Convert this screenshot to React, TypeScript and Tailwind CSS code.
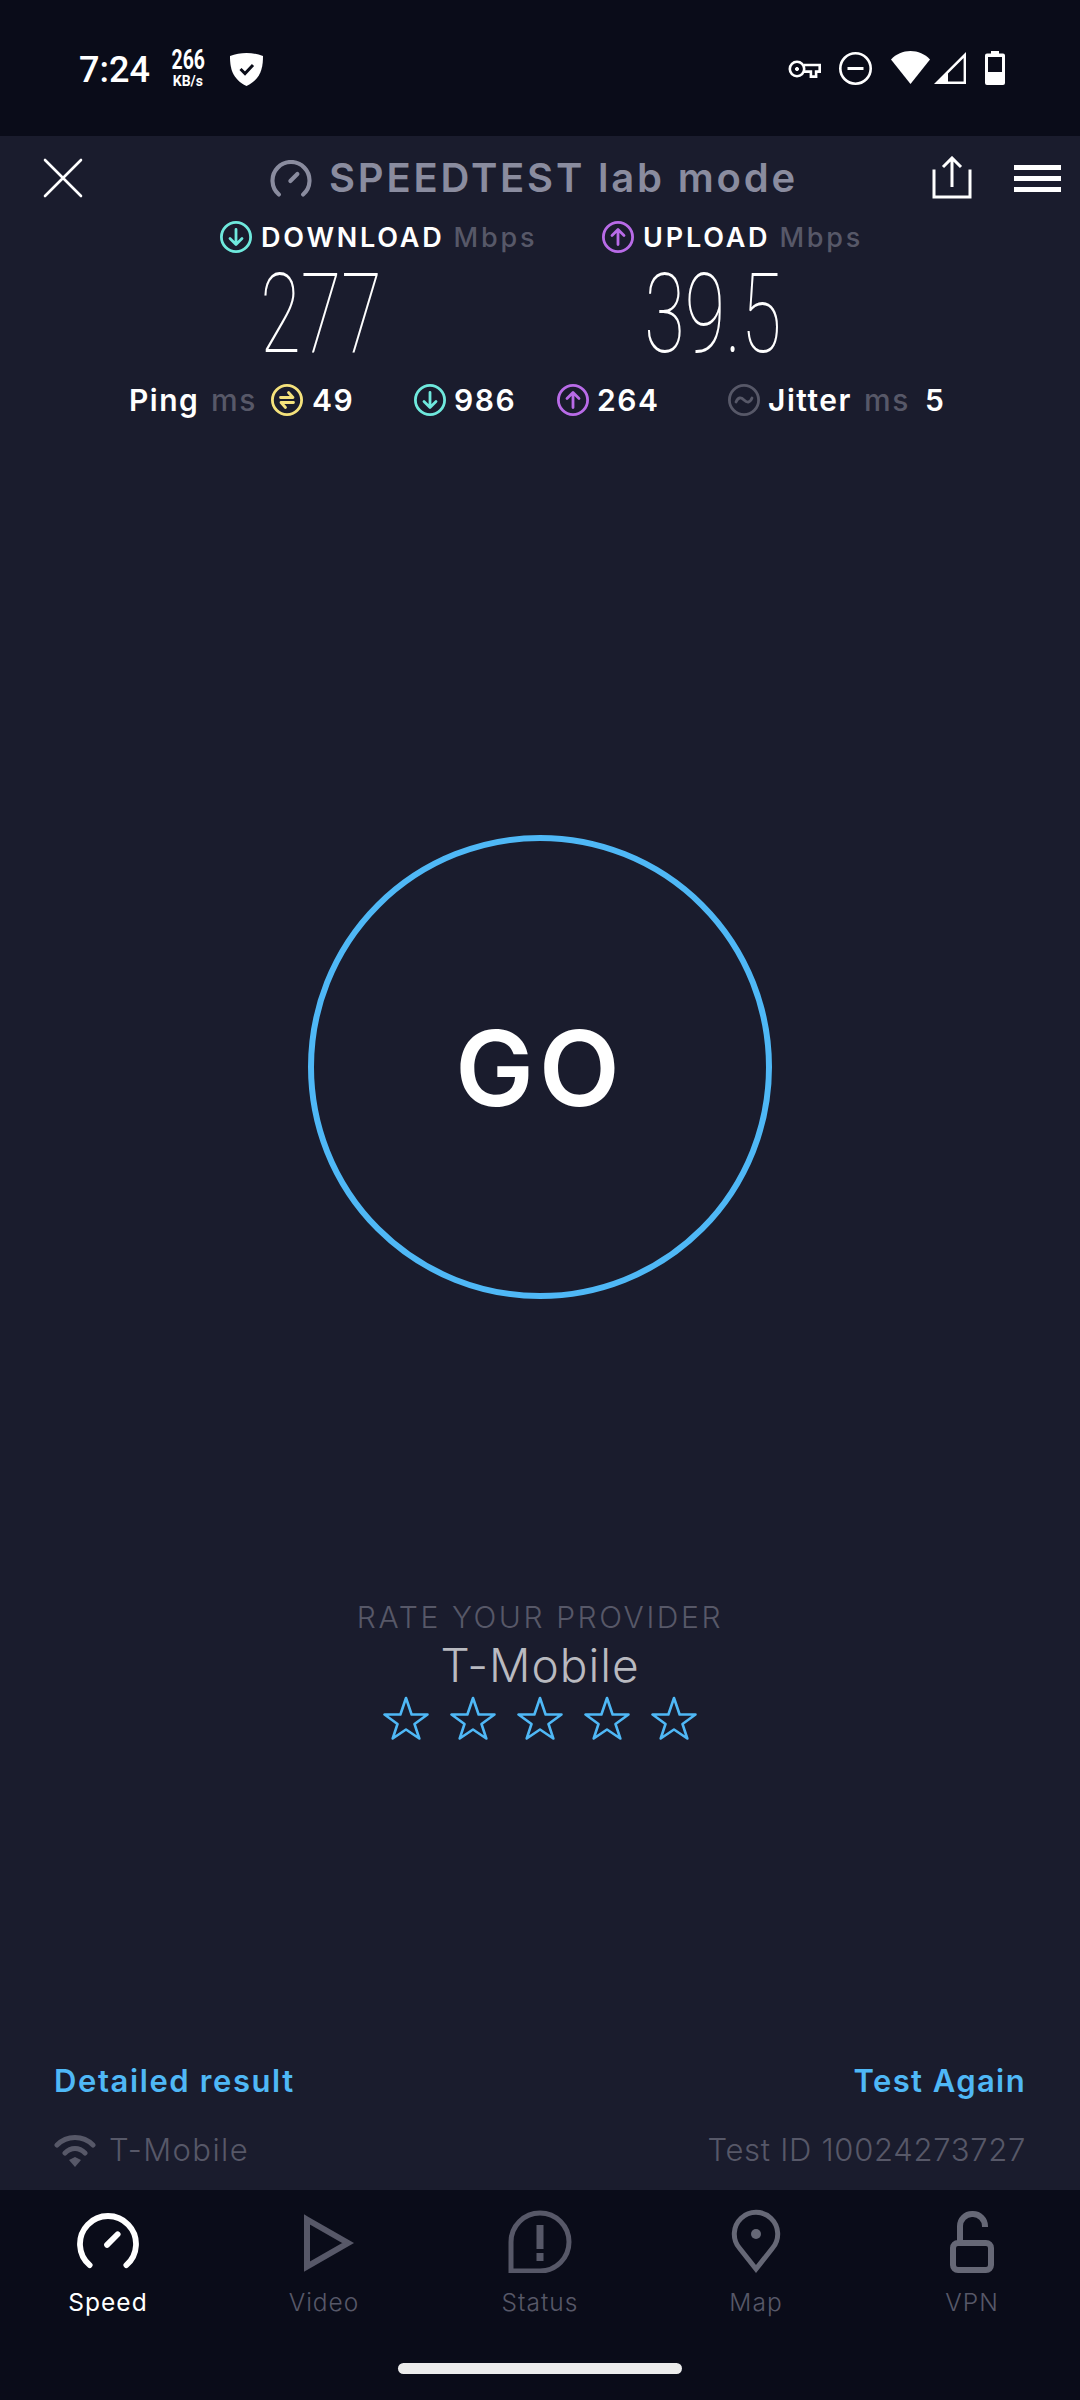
import { ReactNode } from "react";

function Gauge({ className, stroke }: { className: string; stroke: number }) {
  return (
    <svg viewBox="0 0 64 58" fill="none" stroke="currentColor" strokeWidth={stroke} strokeLinecap="round" className={className}>
      <path d="M13 54A29 29 0 1 1 51 54" />
      <path d="M31 33L42 22" />
    </svg>
  );
}

function RingIcon({ color, children }: { color: string; children: ReactNode }) {
  return (
    <svg viewBox="0 0 32 32" fill="none" stroke={color} strokeWidth="2.8" strokeLinecap="round" strokeLinejoin="round" className="h-8 w-8 shrink-0">
      <circle cx="16" cy="16" r="14.6" />
      {children}
    </svg>
  );
}

const DownGlyph = () => <path d="M16 8.5V23M10 17.5l6 6 6-6" />;
const UpGlyph = () => <path d="M16 23.5V9M10 14.500l6-6 6 6" />;

function StarOutline() {
  return (
    <svg viewBox="0 0 46 44" fill="none" stroke="#4fb8f6" strokeWidth="2.6" strokeLinejoin="round" className="h-[44px] w-[46px]">
      <path d="M23 2l5.600 16.500H44.500L31.500 28l4.800 14.500L23 33.500 9.700 42.500 14.500 28 1.500 18.500H17.400z" />
    </svg>
  );
}

function StatusBar() {
  return (
    <div className="flex h-[136px] shrink-0 items-start justify-between bg-[#0a0c19] pl-[79px] pr-[75px] pt-[50px] text-white">
      <div className="flex items-start">
        <span className="mt-[-1px] font-['Roboto',sans-serif] text-[36px] font-medium leading-[42px]">7:24</span>
        <div className="ml-[19px] flex w-[38px] flex-col items-center font-['Roboto',sans-serif] font-bold">
          <span className="mt-[-3px] origin-center scale-x-[0.72] whitespace-nowrap text-[27px] leading-[27px]">266</span>
          <span className="text-[14px] leading-[14px]">KB/s</span>
        </div>
        <svg viewBox="0 0 33 33" className="ml-[23px] mt-[3px] h-[33px] w-[33px]">
          <path d="M16.500 0C22 0 28 1 33 3c0 12-2 23-16.500 30C2 26 0 15 0 3 5 1 11 0 16.500 0z" fill="#fff" />
          <path d="M10.500 16l4.500 4.500 8-8.500" fill="none" stroke="#0a0c19" strokeWidth="3" />
        </svg>
      </div>
      <div className="flex items-start">
        <svg viewBox="0 0 33 18" fill="none" stroke="#fff" strokeWidth="2.6" className="mt-[10px] h-[18px] w-[33px]">
          <circle cx="9" cy="9" r="7.200" />
          <circle cx="9" cy="9" r="1.600" fill="#fff" strokeWidth="1" />
          <path d="M16 5h15.700v6.600h-3.600v5h-5.200v-5H16" />
        </svg>
        <svg viewBox="0 0 33 33" fill="none" stroke="#fff" className="ml-[18px] mt-[2px] h-[33px] w-[33px]">
          <circle cx="16.500" cy="16.500" r="15.200" strokeWidth="2.6" />
          <path d="M8.500 16.500h16" strokeWidth="3" />
        </svg>
        <svg viewBox="0 0 39 33" className="ml-[19px] mt-[1px] h-[33px] w-[39px]">
          <path d="M0 8.500C5 3 12 0 19.500 0S34 3 39 8.500L19.500 33z" fill="#fff" />
        </svg>
        <svg viewBox="0 0 32 32" className="ml-[4px] mt-[2px] h-8 w-8">
          <path d="M32 0v32H0zM29.600 6L14 21.500V29.600h15.600z" fill="#fff" fillRule="evenodd" />
        </svg>
        <svg viewBox="0 0 20 34" className="ml-[19px] mt-[1px] h-[34px] w-5">
          <path d="M6 0h8v2.500h4a2 2 0 0 1 2 2V32a2 2 0 0 1-2 2H2a2 2 0 0 1-2-2V4.500a2 2 0 0 1 2-2h4z" fill="#fff" />
          <rect x="3" y="6" width="14" height="15" fill="#0a0c19" />
        </svg>
      </div>
    </div>
  );
}

function Header() {
  return (
    <div className="flex h-[84px] shrink-0 items-center text-white">
      <svg viewBox="0 0 40 40" fill="none" stroke="currentColor" strokeWidth="2.6" strokeLinecap="round" className="ml-[43px] h-10 w-10">
        <path d="M2 2l36 36M38 2L2 38" />
      </svg>
      <div className="ml-[187px] flex w-[661px] items-center text-[#8a8c9f]">
        <Gauge className="h-[37px] w-[42px] shrink-0" stroke={6.5} />
        <span className="ml-[17px] whitespace-nowrap text-[40px] font-semibold leading-none tracking-[2.8px]">SPEEDTEST lab mode</span>
      </div>
      <svg viewBox="0 0 42 44" fill="none" stroke="currentColor" strokeWidth="3" strokeLinecap="square" className="h-11 w-[42px]">
        <path d="M3 15v26h36V15" />
        <path d="M21 31V3M12 11l9-9 9 9" strokeLinecap="butt" />
      </svg>
      <div className="ml-[41px] flex w-[47px] flex-col gap-[6px]">
        <div className="h-[5px] bg-white" />
        <div className="h-[5px] bg-white" />
        <div className="h-[5px] bg-white" />
      </div>
    </div>
  );
}

function Results() {
  const labelText = "whitespace-nowrap text-[27px] leading-none tracking-[2.8px]";
  const stat = "whitespace-nowrap tracking-[1.5px]";
  return (
    <div className="shrink-0">
      <div className="mt-[1px] flex h-8 items-center pl-[220px]">
        <div className="flex w-[382px] items-center">
          <RingIcon color="#6fe9dd"><DownGlyph /></RingIcon>
          <span className={`ml-[9px] ${labelText} font-semibold text-white`}>DOWNLOAD</span>
          <span className={`ml-[9px] ${labelText} font-medium text-[#575868]`}>Mbps</span>
        </div>
        <RingIcon color="#b96be8"><UpGlyph /></RingIcon>
        <span className={`ml-[9px] ${labelText} font-semibold text-white`}>UPLOAD</span>
        <span className={`ml-[9px] ${labelText} font-medium text-[#575868]`}>Mbps</span>
      </div>
      <div className="mt-[21px] flex h-[80px] items-center font-['Roboto',sans-serif] text-[112px] font-thin leading-[80px] text-white">
        <div className="ml-[221px] flex w-[200px] justify-center"><span className="scale-x-[0.66]">277</span></div>
        <div className="ml-[192px] flex w-[200px] justify-center"><span className="scale-x-[0.66]">39.5</span></div>
      </div>
      <div className="mt-[30px] flex h-8 items-center text-[30px] font-semibold leading-none text-white">
        <span className={`ml-[129px] w-[82px] ${stat}`}>Ping</span>
        <span className={`w-[60px] font-medium text-[#575868] ${stat}`}>ms</span>
        <RingIcon color="#f5e27c"><path d="M9.500 13.500H22l-4.500-5M22.500 18.500H10l4.500 5" /></RingIcon>
        <span className={`ml-[9px] w-[102px] ${stat}`}>49</span>
        <RingIcon color="#6fe9dd"><DownGlyph /></RingIcon>
        <span className={`ml-[8px] w-[103px] ${stat}`}>986</span>
        <RingIcon color="#b96be8"><UpGlyph /></RingIcon>
        <span className={`ml-[8px] w-[131px] ${stat}`}>264</span>
        <RingIcon color="#575868"><path d="M8 18c2-5 5-5 8-2s6 3 8-2" /></RingIcon>
        <span className={`ml-[8px] w-[96px] ${stat}`}>Jitter</span>
        <span className={`w-[61px] font-medium text-[#575868] ${stat}`}>ms</span>
        <span>5</span>
      </div>
    </div>
  );
}

function GoButton() {
  return (
    <div className="mt-[419px] flex justify-center">
      <div className="flex h-[464px] w-[464px] items-center justify-center rounded-full border-[6px] border-[#4fb8f6]">
        <span className="text-[105px] font-semibold leading-none tracking-[5px] text-white">GO</span>
      </div>
    </div>
  );
}

function Rating() {
  return (
    <div className="mt-[300px] flex flex-col items-center">
      <span className="whitespace-nowrap text-[30px] font-light leading-[36px] tracking-[2.6px] text-[#575868]">RATE YOUR PROVIDER</span>
      <span className="mt-[4px] text-[46px] font-light leading-[52px] tracking-[1px] text-[#b9bac0]">T-Mobile</span>
      <div className="mt-[5px] flex gap-[21px]">
        {[0, 1, 2, 3, 4].map((i) => (
          <StarOutline key={i} />
        ))}
      </div>
    </div>
  );
}

function Footer() {
  return (
    <div className="mt-auto px-[54px] pb-[22px]">
      <div className="flex items-center justify-between text-[31px] font-semibold leading-[36px] text-[#4fb8f6]">
        <span className="tracking-[1.6px]">Detailed result</span>
        <span className="tracking-[1.4px]">Test Again</span>
      </div>
      <div className="mt-[33px] flex items-center justify-between text-[31px] font-light leading-[36px] text-[#575868]">
        <div className="flex items-center">
          <svg viewBox="0 0 42 33" fill="none" stroke="#575868" strokeWidth="5" strokeLinecap="round" className="h-[33px] w-[42px]">
            <path d="M3 11C13 1 29 1 39 11M11 19c6-6 14-6 20 0" />
            <path d="M15 26l6-3 6 3-6 7z" fill="#575868" stroke="none" />
          </svg>
          <span className="ml-[13px] tracking-[1.4px]">T-Mobile</span>
        </div>
        <span className="tracking-[0.7px]">Test ID 10024273727</span>
      </div>
    </div>
  );
}

const navIcon = "h-16 w-16";

const tabs: { label: string; icon: ReactNode }[] = [
  { label: "Speed", icon: <Gauge className="h-[56px] w-[64px] text-white" stroke={6} /> },
  {
    label: "Video",
    icon: (
      <svg viewBox="0 0 64 64" fill="none" stroke="#575868" strokeWidth="6" className={navIcon}>
        <path d="M15 10.500L56 34 15 57.500z" />
      </svg>
    ),
  },
  {
    label: "Status",
    icon: (
      <svg viewBox="0 0 64 64" fill="none" stroke="#575868" strokeWidth="5" className={navIcon}>
        <path d="M3 62V33a29 29 0 1 1 29 29z" />
        <path d="M32 16v24M32 44v8" strokeWidth="7" />
      </svg>
    ),
  },
  {
    label: "Map",
    icon: (
      <svg viewBox="0 0 64 64" fill="none" stroke="#666876" strokeWidth="5" className={navIcon}>
        <path d="M32 60L15.400 39A21.700 21.700 0 1 1 48.600 39z" />
        <circle cx="32" cy="25" r="5" fill="#666876" stroke="none" />
      </svg>
    ),
  },
  {
    label: "VPN",
    icon: (
      <svg viewBox="0 0 64 64" fill="none" stroke="#666876" strokeWidth="6" className={navIcon}>
        <rect x="13" y="34" width="38" height="27" rx="5" />
        <path d="M20 34V17a12 12 0 0 1 12-12h1a12 12 0 0 1 12 12v1" />
      </svg>
    ),
  },
];

function BottomNav() {
  return (
    <div className="h-[210px] shrink-0 bg-[#0a0c19]">
      <div className="grid grid-cols-5 pt-[19px]">
        {tabs.map((t) => (
          <div key={t.label} className="flex flex-col items-center">
            <div className="flex h-16 items-center justify-center">{t.icon}</div>
            <span className={`mt-[13px] text-[24.5px] leading-[32px] tracking-[1px] ${t.label === "Speed" ? "font-normal text-white" : "font-light text-[#575868]"}`}>
              {t.label}
            </span>
          </div>
        ))}
      </div>
      <div className="mx-auto mt-[45px] h-[11px] w-[284px] rounded-full bg-[#ececec]" />
    </div>
  );
}

export default function App() {
  return (
    <div className="flex h-[2400px] w-[1080px] flex-col overflow-hidden bg-[#1a1c2d] font-['Inter',sans-serif]">
      <StatusBar />
      <div className="flex flex-1 flex-col">
        <Header />
        <Results />
        <GoButton />
        <Rating />
        <Footer />
      </div>
      <BottomNav />
    </div>
  );
}
